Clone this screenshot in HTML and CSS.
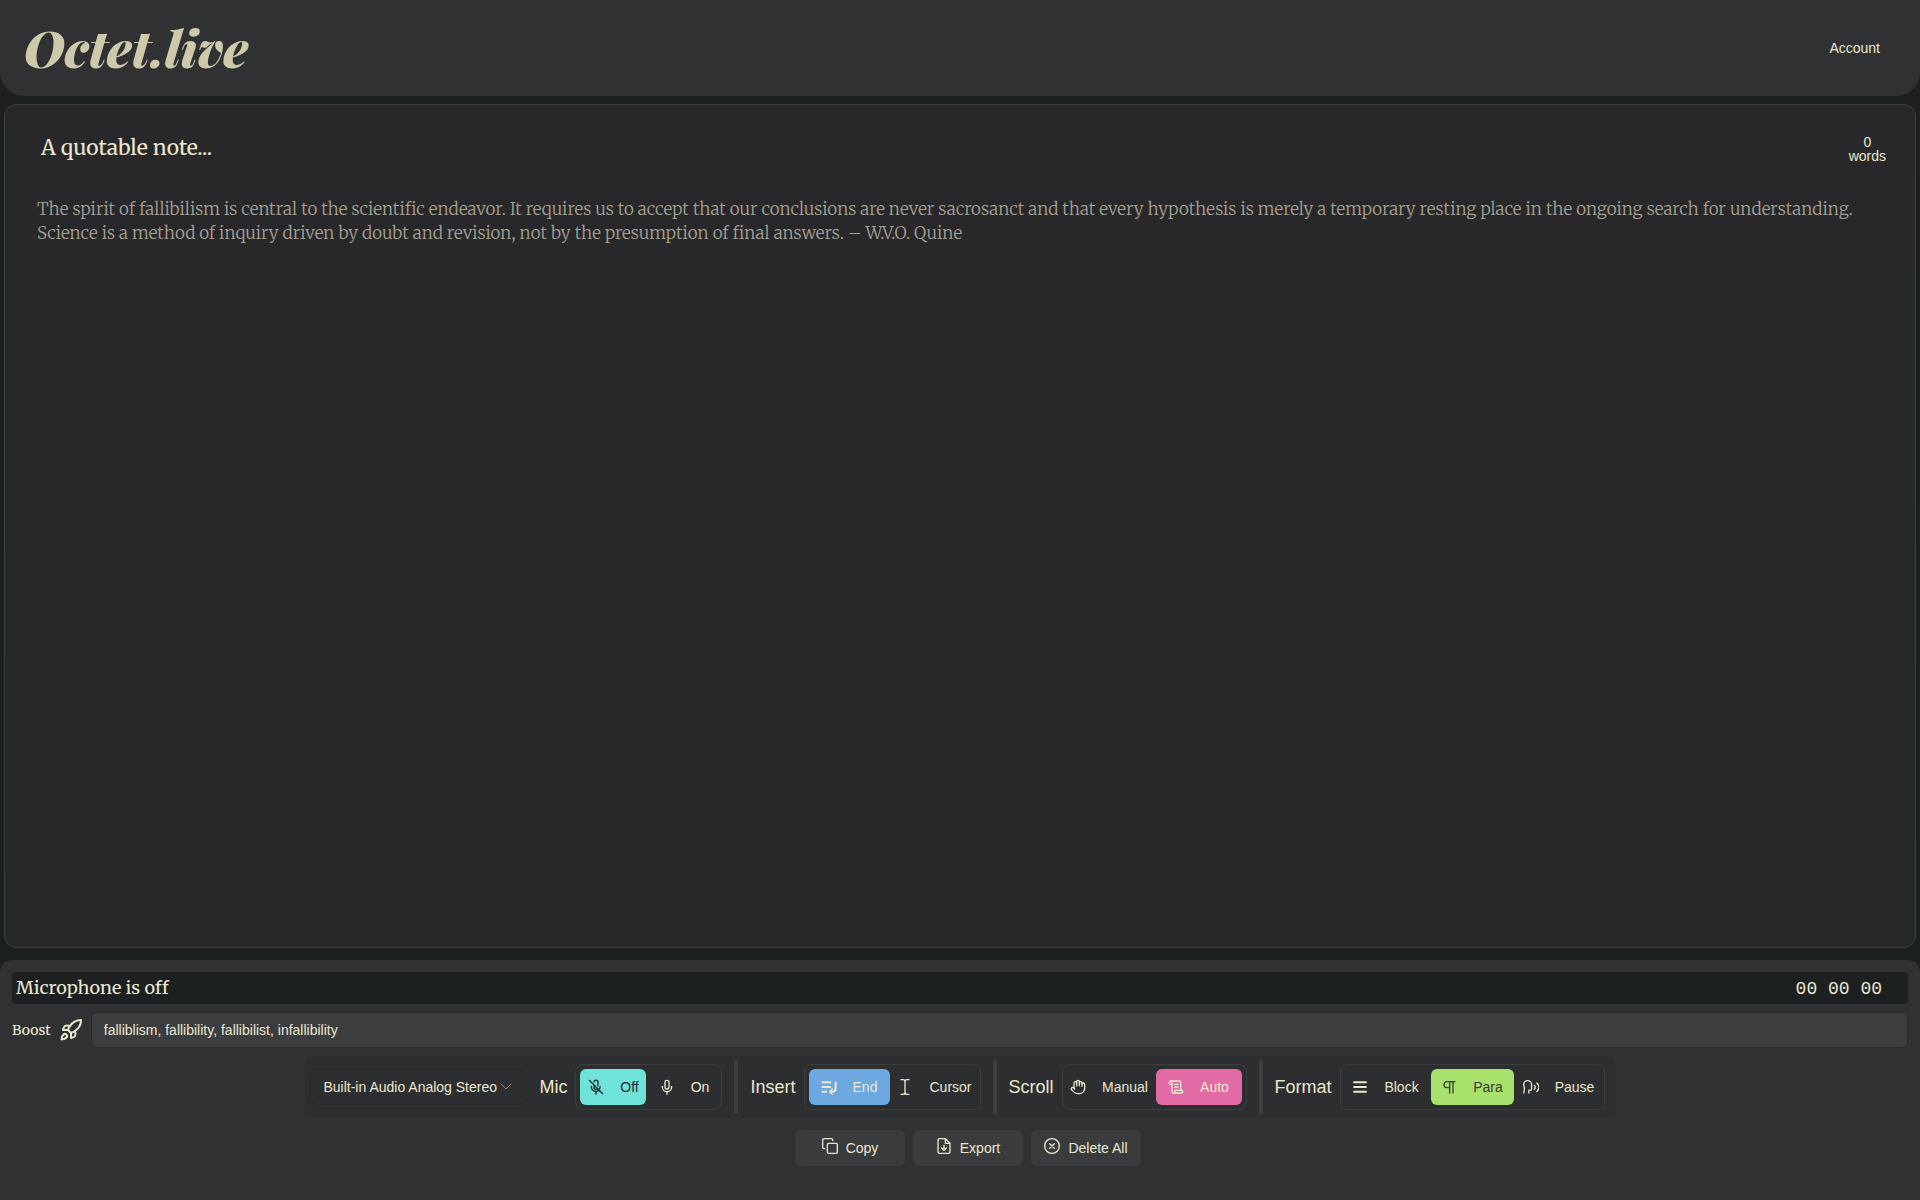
FILE: index.html
```html
<!DOCTYPE html>
<html lang="en">
<head>
<meta charset="utf-8">
<meta name="viewport" content="width=device-width, initial-scale=1">
<title>Octet.live</title>
<link rel="stylesheet" href="styles.css">
</head>
<body>
<header class="site-header">
  <h1 class="logo">Octet.live</h1>
  <button class="account" type="button">Account</button>
</header>

<main class="note">
  <div class="note-head">
    <input class="note-title" type="text" value="A quotable note..." aria-label="Note title">
    <div class="word-count"><span>0</span><span>words</span></div>
  </div>
  <textarea class="note-body" aria-label="Note text" placeholder="The spirit of fallibilism is central to the scientific endeavor. It requires us to accept that our conclusions are never sacrosanct and that every hypothesis is merely a temporary resting place in the ongoing search for understanding. Science is a method of inquiry driven by doubt and revision, not by the presumption of final answers. – W.V.O. Quine"></textarea>
</main>

<footer class="panel">
  <div class="status">
    <span class="status-text">Microphone is off</span>
    <time class="timer">00 00 00</time>
  </div>

  <div class="boost">
    <label class="boost-label" for="boost">Boost
      <svg class="rocket" viewBox="0 0 24 24"><path d="M4.5 16.500c-1.500 1.260-2 5-2 5s3.740-.5 5-2c.71-.84.7-2.130-.09-2.910a2.180 2.180 0 0 0-2.910-.09z"/><path d="m12 15-3-3a22 22 0 0 1 2-3.950A12.880 12.880 0 0 1 22 2c0 2.720-.78 7.500-6 11a22.350 22.350 0 0 1-4 2z"/><path d="M9 12H4s.55-3.030 2-4c1.620-1.080 5 0 5 0"/><path d="M12 15v5s3.030-.55 4-2c1.080-1.620 0-5 0-5"/></svg>
    </label>
    <input class="boost-input" id="boost" type="text" value="falliblism, fallibility, fallibilist, infallibility">
  </div>

  <div class="toolbar">
    <div class="device">
      <select class="device-select" aria-label="Audio input"><option>Built-in Audio Analog Stereo</option></select>
      <svg class="chevron" viewBox="0 0 12 12"><path d="m1 3 5 5 5-5"/></svg>
    </div>

    <div class="choice" role="radiogroup" aria-labelledby="name-mic">
      <span class="choice-name" id="name-mic">Mic</span>
      <div class="options options-mic">
        <label class="option teal"><input type="radio" name="mic" checked>
          <svg class="icon" viewBox="0 0 24 24"><path d="m2 2 20 20M18 11v1c0 1-.2 1.800-.6 2.600M5 11v1a7 7 0 0 0 11 5.500M9 9v4a3 3 0 0 0 5 2M15 10V5a3 3 0 0 0-6-.7M12 19v4"/></svg><span>Off</span></label>
        <label class="option teal"><input type="radio" name="mic">
          <svg class="icon" viewBox="0 0 24 24"><rect x="9" y="2" width="6" height="13" rx="3"/><path d="M5 11v1a7 7 0 0 0 14 0v-1M12 19v4"/></svg><span>On</span></label>
      </div>
    </div>
    <div class="rule"></div>

    <div class="choice" role="radiogroup" aria-labelledby="name-insert">
      <span class="choice-name" id="name-insert">Insert</span>
      <div class="options options-insert">
        <label class="option blue"><input type="radio" name="insert" checked>
          <svg class="icon" viewBox="0 0 24 24"><path class="thick" d="M1 5h14M1 12h14M1 19h8M22 4v10q0 5-5 5h-3"/><path d="m17 15-4 4 4 4"/></svg><span>End</span></label>
        <label class="option blue"><input type="radio" name="insert">
          <svg class="icon" viewBox="0 0 24 24"><path d="M6 1h3q3 0 3 3 0-3 3-3h3M6 23h3q3 0 3-3 0 3 3 3h3M12 4v16"/></svg><span>Cursor</span></label>
      </div>
    </div>
    <div class="rule"></div>

    <div class="choice" role="radiogroup" aria-labelledby="name-scroll">
      <span class="choice-name" id="name-scroll">Scroll</span>
      <div class="options options-scroll">
        <label class="option pink"><input type="radio" name="scroll">
          <svg class="icon" viewBox="0 0 24 24"><path d="M18 11V6a2 2 0 0 0-4 0M14 10V4a2 2 0 0 0-4 0v2M10 10.500V6a2 2 0 0 0-4 0v8"/><path d="M18 8a2 2 0 1 1 4 0v6a8 8 0 0 1-8 8h-2c-2.800 0-4.500-.86-5.990-2.340l-3.600-3.600a2 2 0 0 1 2.830-2.820L7 15"/></svg><span>Manual</span></label>
        <label class="option pink"><input type="radio" name="scroll" checked>
          <svg class="icon" viewBox="0 0 24 24"><path d="M15 12h-5M15 8h-5M19 17V5a2 2 0 0 0-2-2H4"/><path d="M8 21h12a2 2 0 0 0 2-2v-1a1 1 0 0 0-1-1H11a1 1 0 0 0-1 1v1a2 2 0 1 1-4 0V5a2 2 0 1 0-4 0v2a1 1 0 0 0 1 1h3"/></svg><span>Auto</span></label>
      </div>
    </div>
    <div class="rule"></div>

    <div class="choice" role="radiogroup" aria-labelledby="name-format">
      <span class="choice-name" id="name-format">Format</span>
      <div class="options options-format">
        <label class="option green"><input type="radio" name="format">
          <svg class="icon" viewBox="0 0 24 24"><path class="thick" d="M2 5h20M2 12h20M2 19h20"/></svg><span>Block</span></label>
        <label class="option green"><input type="radio" name="format" checked>
          <svg class="icon" viewBox="0 0 24 24"><path d="M13 21V4M18 21V4M21 4H9a4 4 0 0 0 0 9h4"/></svg><span>Para</span></label>
        <label class="option green"><input type="radio" name="format">
          <svg class="icon" viewBox="0 0 24 24"><path d="M8.800 21v-4.100l1.900.2a2.300 2.300 0 0 0 2.164-2.100V8.300A5.370 5.370 0 0 0 1 8.250c0 2.800.656 3.054 1 4.550a5.770 5.770 0 0 1 .029 2.758L1 21"/><path d="M20.800 18.800a8 8 0 0 0 0-12.600M17 15.500a4 4 0 0 0 0-6"/></svg><span>Pause</span></label>
      </div>
    </div>
  </div>

  <div class="actions">
    <button class="action" type="button"><svg class="icon" viewBox="0 0 24 24"><rect x="8" y="8" width="15" height="15" rx="2"/><path d="M4 16H3a2 2 0 0 1-2-2V3a2 2 0 0 1 2-2h11a2 2 0 0 1 2 2v1"/></svg>Copy</button>
    <button class="action" type="button"><svg class="icon" viewBox="0 0 24 24"><path d="M14 1H5a2 2 0 0 0-2 2v18a2 2 0 0 0 2 2h14a2 2 0 0 0 2-2V8zM14 1v7h7M12 11v7M8.500 15l3.500 3.500 3.500-3.500"/></svg>Export</button>
    <button class="action" type="button"><svg class="icon" viewBox="0 0 24 24"><circle cx="12" cy="12" r="11"/><path d="m8.500 8.500 7 7M15.500 8.500l-7 7"/></svg>Delete All</button>
  </div>
</footer>
</body>
</html>
```
FILE: styles.css
```css
:root {
  --surface: #303133;
  --text: #ebe7d0;
  --line: #3c3d3f;
  --sans: "Liberation Sans", Arial, sans-serif;
  --serif: "Merriweather", "DejaVu Serif", serif;
}

* { box-sizing: border-box; }

body {
  margin: 0;
  min-height: 100vh;
  display: flex;
  flex-direction: column;
  background: linear-gradient(#1c1e20, #1b2020);
  color: var(--text);
  font: 14px/16px var(--sans);
}

button, input, select, textarea {
  color: inherit;
  font: inherit;
}

.site-header {
  display: flex;
  align-items: center;
  justify-content: space-between;
  height: 96px;
  padding: 0 40px 0 24px;
  background: var(--surface);
  border-radius: 0 0 24px 24px;
}

.logo {
  margin: 0;
  color: #cdc9ab;
  font: italic 900 50px/64px "Playfair Display", "Liberation Serif", serif;
}

.account {
  padding: 8px 0;
  border: 0;
  background: none;
}

.note {
  flex: 1;
  display: flex;
  flex-direction: column;
  margin: 8px 4px 12px;
  padding: 24px 28px;
  background: #28282a;
  border: 1px solid var(--line);
  border-radius: 12px;
}

.note-head {
  display: flex;
  align-items: center;
  justify-content: space-between;
  height: 40px;
  margin-bottom: 24px;
}

.note-title {
  flex: 1;
  padding: 0 8px 2px;
  border: 0;
  background: none;
  font: 21px/32px var(--serif);
}

.word-count {
  display: flex;
  flex-direction: column;
  align-items: center;
  margin-right: 1px;
  line-height: 14px;
}

.note-body {
  flex: 1;
  width: 100%;
  padding: 4px;
  border: 0;
  background: none;
  resize: none;
  font: 300 17px/24px var(--serif);
}

.note-body::placeholder {
  color: #a5a294;
  opacity: 1;
}

.panel {
  display: flex;
  flex-direction: column;
  padding: 12px 12px 34px;
  background: var(--surface);
  border-radius: 12px 12px 0 0;
}

.status {
  display: flex;
  align-items: center;
  justify-content: space-between;
  height: 32px;
  padding: 0 26px 0 4px;
  background: #1c2021;
  border-radius: 4px;
}

.status-text { font: 18px/24px var(--serif); }

.timer {
  padding-top: 2px;
  font: 18px/24px "Liberation Mono", monospace;
  white-space: pre;
}

.boost {
  display: flex;
  align-items: center;
  gap: 8px;
  margin-top: 8px;
}

.boost-label {
  display: flex;
  align-items: center;
  gap: 8px;
  font: 14px/24px var(--serif);
}

.boost-input {
  flex: 1;
  height: 36px;
  padding: 0 12px;
  border: 1px solid #2a2b2c;
  border-radius: 6px;
  background: var(--line);
}

svg {
  fill: none;
  stroke: currentColor;
  stroke-width: 2;
  stroke-linecap: round;
  stroke-linejoin: round;
}

.rocket {
  width: 24px;
  height: 24px;
}

.icon {
  flex: none;
  width: 16px;
  height: 16px;
}

.thick {
  stroke-width: 3;
  stroke-linecap: butt;
}

.toolbar {
  align-self: center;
  display: flex;
  align-items: center;
  gap: 12px;
  height: 62px;
  margin-top: 8px;
  padding: 3px 8px 3px 3px;
  background: #2d2e2f;
  border: 1px solid #2b2c2e;
  border-radius: 8px;
}

.device { display: grid; }

.device-select,
.chevron { grid-area: 1 / 1; }

.device-select {
  appearance: none;
  width: 217px;
  height: 36px;
  padding: 0 12px;
  border: 1px solid #29292b;
  border-radius: 8px;
  background: none;
}

.chevron {
  align-self: center;
  justify-self: end;
  width: 12px;
  height: 12px;
  margin-right: 15px;
  color: #8b897d;
  stroke-width: 1;
  pointer-events: none;
}

.choice {
  display: flex;
  align-items: center;
  gap: 8px;
}

.choice-name { font-size: 18px; line-height: 24px; }

.options {
  display: grid;
  gap: 4px;
  padding: 4px;
  border: 1px solid var(--line);
  border-radius: 8px;
}

.options-mic { grid-template-columns: 66px 67px; }
.options-insert { grid-template-columns: 81px 82px; }
.options-scroll { grid-template-columns: 85px 86px; }
.options-format { grid-template-columns: 82px 83px 82px; }

.option {
  position: relative;
  display: flex;
  align-items: center;
  justify-content: center;
  gap: 16px;
  height: 36px;
  border-radius: 6px;
}

.option input {
  position: absolute;
  inset: 0;
  margin: 0;
  opacity: 0;
}

.teal:has(:checked) { background: #6fe3d9; color: #262a2e; }
.blue:has(:checked) { background: #6ea8e0; }
.pink:has(:checked) { background: #e26ba5; }
.green:has(:checked) { background: #a8e16c; color: #3a3a36; }

.rule {
  align-self: stretch;
  width: 4px;
  background: var(--line);
}

.actions {
  display: flex;
  justify-content: center;
  gap: 8px;
  margin-top: 12px;
  padding-left: 16px;
}

.action {
  display: flex;
  align-items: center;
  justify-content: center;
  gap: 8px;
  width: 110px;
  height: 36px;
  padding: 0;
  border: 0;
  border-radius: 6px;
  background: #3a3b3d;
}

.action .icon { margin-bottom: 4px; }
```
